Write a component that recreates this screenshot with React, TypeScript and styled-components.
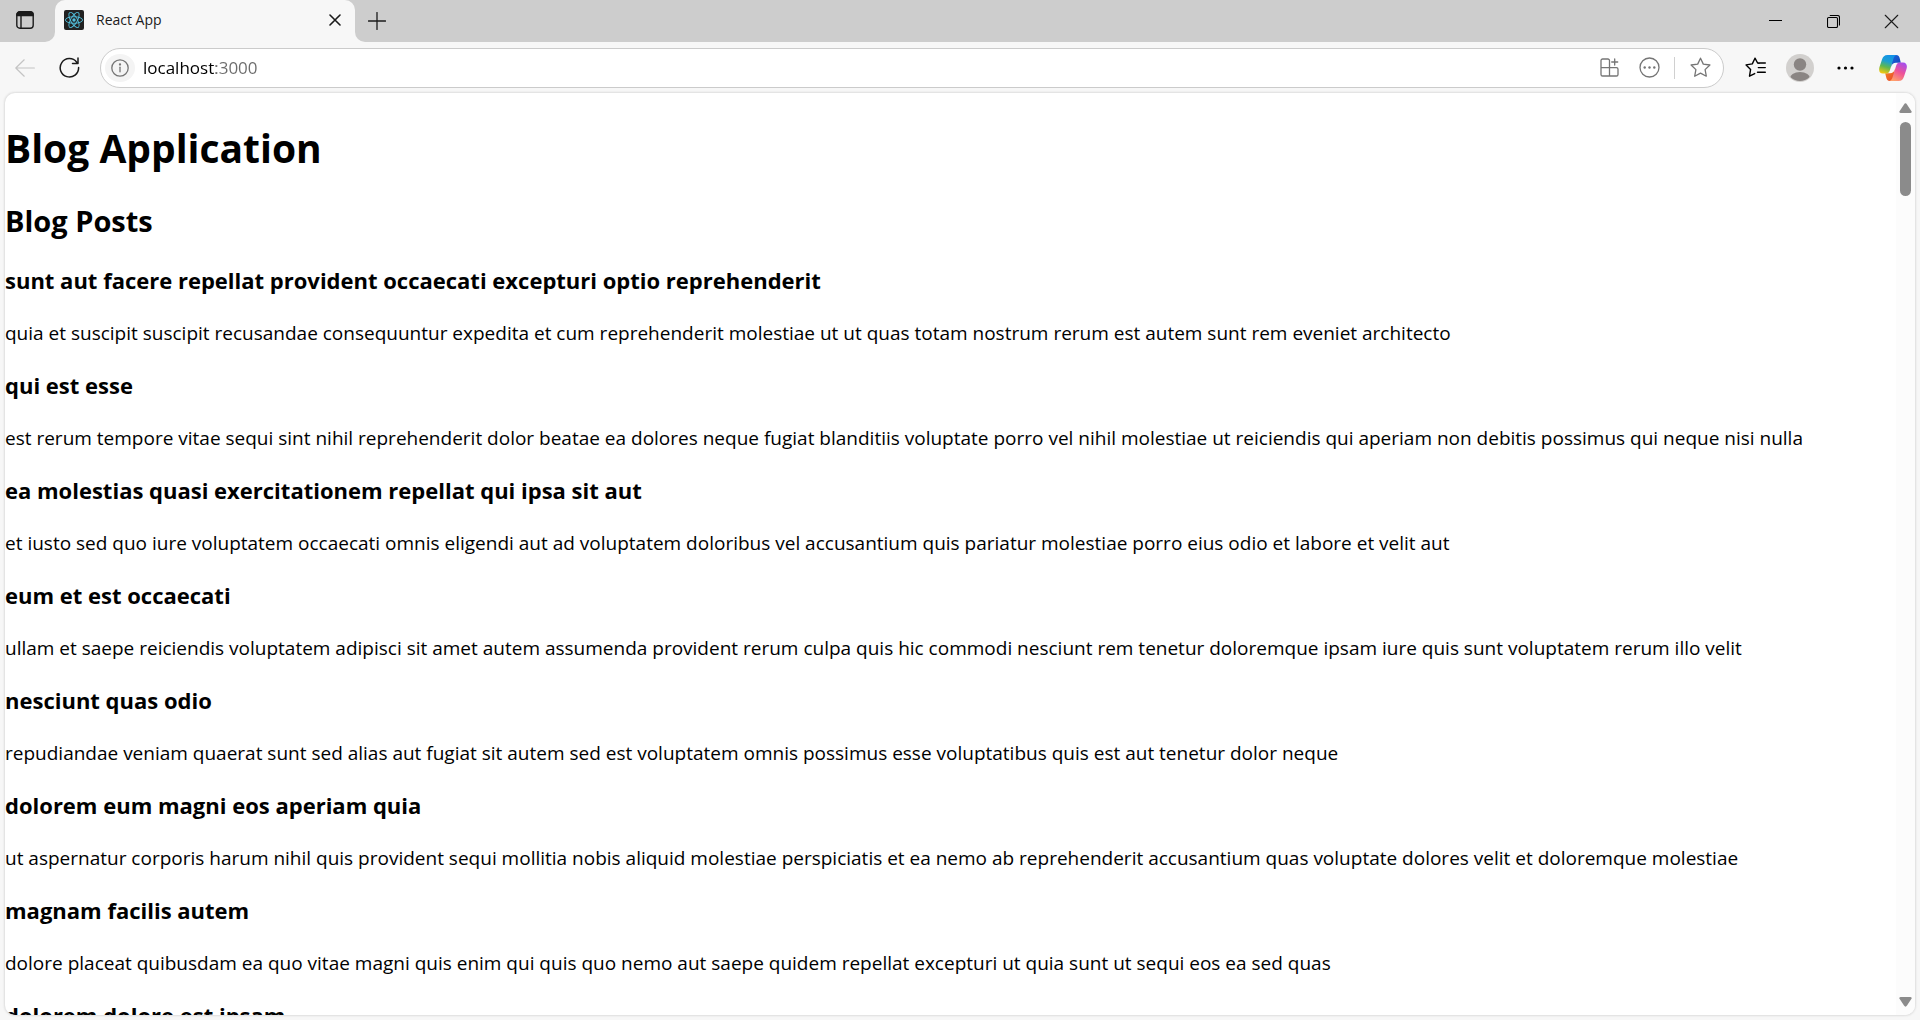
import React from "react";
import styled, { createGlobalStyle } from "styled-components";

const chrome = "#f7f7f7";
const strip = "#cdcdcd";

const GlobalStyle = createGlobalStyle`
  * { box-sizing: border-box; }
  body {
    margin: 0;
    background: ${chrome};
    color: #000;
    font-family: "Open Sans", "Noto Sans", sans-serif;
  }
  button { font: inherit; color: inherit; }
`;

const Window = styled.div`
  display: flex;
  flex-direction: column;
  height: 100vh;
  overflow: hidden;
`;

const TabStrip = styled.header`
  display: flex;
  height: 42px;
`;

const StripStart = styled.div`
  display: flex;
  align-items: center;
  padding: 0 17px 2px 12px;
  background: ${strip};
  border-bottom-right-radius: 10px;
`;

const StripEnd = styled.div`
  flex: 1;
  display: flex;
  align-items: center;
  justify-content: space-between;
  padding-left: 8px;
  background: ${strip};
  border-bottom-left-radius: 10px;
`;

const IconButton = styled.button<{ $width?: number; $height?: number; $color?: string }>`
  display: flex;
  flex: none;
  align-items: center;
  justify-content: center;
  width: ${(p) => p.$width ?? 24}px;
  height: ${(p) => p.$height ?? 32}px;
  padding: 0;
  border: 0;
  background: none;
  color: ${(p) => p.$color ?? "#1b1b1b"};
  svg { display: block; }
`;

const TabWell = styled.div`
  width: 300px;
  background: linear-gradient(${strip} 50%, ${chrome} 50%);
`;

const Tab = styled.div`
  display: flex;
  align-items: center;
  height: 100%;
  padding: 0 8px 2px 9px;
  gap: 12px;
  background: ${chrome};
  border-radius: 10px 10px 0 0;
`;

const TabTitle = styled.span`
  flex: 1;
  font-size: 14px;
  line-height: 20px;
  color: #1b1b1b;
`;

const WindowControls = styled.div`
  display: flex;
`;

const Toolbar = styled.nav`
  display: flex;
  align-items: center;
  height: 51px;
  padding: 0 13px 0 11px;
`;

const AddressBar = styled.form`
  flex: 1;
  display: flex;
  align-items: center;
  height: 40px;
  margin-right: 16px;
  padding: 0 3px 0 4px;
  border: 1px solid #cbcbcb;
  border-radius: 20px;
  background: #fff;
`;

const InfoButton = styled(IconButton)`
  border-radius: 50%;
  background: #f4f4f4;
`;

const CopilotButton = styled(IconButton)`
  margin-left: 19px;
`;

const Address = styled.input`
  flex: 1;
  min-width: 0;
  padding: 0 8px;
  border: 0;
  outline: 0;
  font: 17px/24px "Open Sans", "Noto Sans", sans-serif;
  background: linear-gradient(90deg, #000 81px, #6b6b6b 81px);
  background-clip: text;
  -webkit-text-fill-color: transparent;
`;

const Divider = styled.span`
  width: 1px;
  height: 22px;
  margin: 0 5px;
  background: #d0d0d0;
`;

const Page = styled.div`
  flex: 1;
  display: flex;
  min-height: 0;
  margin: 0 5px 5px;
  overflow: hidden;
  border-radius: 10px;
  background: #fff;
  box-shadow: 0 0 2px 1px #dedede;
`;

const Content = styled.main`
  flex: 1;
  min-width: 0;
  overflow: hidden;
`;

const AppTitle = styled.h1`
  margin: 28px 0 26px;
  font-size: 39px;
  line-height: 54px;
`;

const SectionTitle = styled.h2`
  margin: 0 0 24px;
  font-size: 29px;
  line-height: 40px;
`;

const Post = styled.article`
  margin-bottom: 23px;
`;

const PostTitle = styled.h3`
  margin: 0 0 24px;
  font-size: 22px;
  line-height: 31px;
`;

const PostBody = styled.p`
  margin: 0;
  font-size: 19px;
  line-height: 27px;
`;

const ScrollBar = styled.div`
  display: flex;
  flex-direction: column;
  align-items: center;
  width: 19px;
  padding: 5px 0 3px;
  background: #fcfcfc;
`;

const ScrollTrack = styled.div`
  flex: 1;
  padding-top: 4px;
`;

const ScrollThumb = styled.div`
  width: 11px;
  height: 74px;
  border-radius: 6px;
  background: #8b8b8b;
`;

const posts = [
  {
    title: "sunt aut facere repellat provident occaecati excepturi optio reprehenderit",
    body: "quia et suscipit suscipit recusandae consequuntur expedita et cum reprehenderit molestiae ut ut quas totam nostrum rerum est autem sunt rem eveniet architecto",
  },
  {
    title: "qui est esse",
    body: "est rerum tempore vitae sequi sint nihil reprehenderit dolor beatae ea dolores neque fugiat blanditiis voluptate porro vel nihil molestiae ut reiciendis qui aperiam non debitis possimus qui neque nisi nulla",
  },
  {
    title: "ea molestias quasi exercitationem repellat qui ipsa sit aut",
    body: "et iusto sed quo iure voluptatem occaecati omnis eligendi aut ad voluptatem doloribus vel accusantium quis pariatur molestiae porro eius odio et labore et velit aut",
  },
  {
    title: "eum et est occaecati",
    body: "ullam et saepe reiciendis voluptatem adipisci sit amet autem assumenda provident rerum culpa quis hic commodi nesciunt rem tenetur doloremque ipsam iure quis sunt voluptatem rerum illo velit",
  },
  {
    title: "nesciunt quas odio",
    body: "repudiandae veniam quaerat sunt sed alias aut fugiat sit autem sed est voluptatem omnis possimus esse voluptatibus quis est aut tenetur dolor neque",
  },
  {
    title: "dolorem eum magni eos aperiam quia",
    body: "ut aspernatur corporis harum nihil quis provident sequi mollitia nobis aliquid molestiae perspiciatis et ea nemo ab reprehenderit accusantium quas voluptate dolores velit et doloremque molestiae",
  },
  {
    title: "magnam facilis autem",
    body: "dolore placeat quibusdam ea quo vitae magni quis enim qui quis quo nemo aut saepe quidem repellat excepturi ut quia sunt ut sequi eos ea sed quas",
  },
  { title: "dolorem dolore est ipsam" },
];

const line = { fill: "none", stroke: "currentColor", strokeLinecap: "round", strokeLinejoin: "round" } as const;

const TabActionsIcon = () => (
  <svg width="18" height="18" viewBox="0 0 18 18" {...line} strokeWidth="1.4">
    <rect x="0.8" y="0.8" width="16.4" height="16.4" rx="3" />
    <path d="M1 4.6V3.5A2.5 2.5 0 0 1 3.5 1H14.5A2.5 2.5 0 0 1 17 3.5V4.6Z" fill="currentColor" />
    <path d="M5 5V17" />
  </svg>
);

const ReactIcon = () => (
  <svg width="20" height="20" viewBox="0 0 20 20" fill="none" stroke="#53c1de" strokeWidth="0.9">
    <rect width="20" height="20" rx="2" fill="#222" stroke="none" />
    <ellipse cx="10" cy="10" rx="8.6" ry="3.3" />
    <ellipse cx="10" cy="10" rx="8.6" ry="3.3" transform="rotate(60 10 10)" />
    <ellipse cx="10" cy="10" rx="8.6" ry="3.3" transform="rotate(120 10 10)" />
    <circle cx="10" cy="10" r="1.7" fill="#53c1de" stroke="none" />
  </svg>
);

const CloseIcon = ({ size, weight }: { size: number; weight: number }) => (
  <svg width={size} height={size} viewBox="0 0 12 12" {...line} strokeWidth={weight}>
    <path d="M1 1L11 11M11 1L1 11" />
  </svg>
);

const PlusIcon = () => (
  <svg width="18" height="18" viewBox="0 0 18 18" {...line} strokeWidth="1.3">
    <path d="M9 0.5V17.5M0.5 9H17.5" />
  </svg>
);

const MinimizeIcon = () => (
  <svg width="13" height="13" viewBox="0 0 13 13" stroke="#000">
    <path d="M0 5.5H13" />
  </svg>
);

const RestoreIcon = () => (
  <svg width="13" height="13" viewBox="0 0 13 13" fill="none" stroke="#000" strokeWidth="1.1">
    <rect x="0.5" y="2.5" width="10" height="10" rx="1.2" />
    <path d="M2.8 0.5H10.5A2 2 0 0 1 12.5 2.5V10.4" />
  </svg>
);

const BackIcon = () => (
  <svg width="20" height="18" viewBox="0 0 20 18" {...line} strokeWidth="1.2">
    <path d="M19.4 9H0.8M9.2 0.8L0.8 9L9.2 17.2" />
  </svg>
);

const ReloadIcon = () => (
  <svg width="21" height="21" viewBox="0 0 21 21" {...line} strokeWidth="1.5">
    <path d="M19.6 10.5A9.2 9.2 0 1 1 17.7 5.2L18.6 6.2M19 1V6.5H13.5" />
  </svg>
);

const InfoIcon = () => (
  <svg width="18" height="18" viewBox="0 0 18 18" {...line} strokeWidth="1.3">
    <circle cx="9" cy="9" r="8.2" />
    <path d="M9 8.2V12.8" />
    <circle cx="9" cy="5.5" r="0.5" fill="currentColor" />
  </svg>
);

const AppsIcon = () => (
  <svg width="19" height="19" viewBox="0 0 19 19" {...line} strokeWidth="1.3">
    <path d="M9.5 9.7V2.6A1.6 1.6 0 0 0 7.900 1H2.600A1.600 1.600 0 0 0 1 2.600V16.400A1.600 1.600 0 0 0 2.600 18H16.400A1.600 1.600 0 0 0 18 16.400V11.300A1.600 1.600 0 0 0 16.400 9.700H1M9.500 9.700V18M14.700 1V7M11.700 4H17.700" />
  </svg>
);

const CircleDotsIcon = () => (
  <svg width="21" height="21" viewBox="0 0 21 21" {...line} strokeWidth="1.3">
    <circle cx="10.5" cy="10.5" r="9.5" />
    <g fill="currentColor" stroke="none">
      <circle cx="5.7" cy="10.5" r="1.2" />
      <circle cx="10.5" cy="10.5" r="1.2" />
      <circle cx="15.3" cy="10.5" r="1.2" />
    </g>
  </svg>
);

const StarIcon = () => (
  <svg width="21" height="21" viewBox="0 0 21 21" {...line} strokeWidth="1.3">
    <path d="M10.5 1.2L13.3 7.1L19.9 8L15.1 12.6L16.3 19.2L10.5 16.1L4.7 19.2L5.9 12.6L1.1 8L7.7 7.1Z" />
  </svg>
);

const FavoritesIcon = () => (
  <svg width="21" height="21" viewBox="0 0 21 21" {...line} strokeWidth="1.4">
    <path d="M14.2 6.2L12.6 6L10 1.2L7.3 6.9L1.1 7.9L5.6 12.4L4.5 19.2L9.7 16.6M13 6H20.3M13.3 10.6H20.3M12.5 15.2H20.3" />
  </svg>
);

const ProfileIcon = () => (
  <svg width="28" height="28" viewBox="0 0 28 28">
    <clipPath id="avatar"><circle cx="14" cy="14" r="13" /></clipPath>
    <circle cx="14" cy="14" r="14" fill="#d2d0ce" />
    <g fill="#8a8583" clipPath="url(#avatar)">
      <circle cx="14" cy="10.5" r="6.2" />
      <ellipse cx="14" cy="25" rx="10.4" ry="7" />
    </g>
  </svg>
);

const DotsIcon = () => (
  <svg width="17" height="4" viewBox="0 0 17 4" fill="#000">
    <circle cx="2" cy="2" r="1.6" />
    <circle cx="8.5" cy="2" r="1.6" />
    <circle cx="15" cy="2" r="1.6" />
  </svg>
);

const CopilotIcon = () => (
  <svg width="28" height="26" viewBox="0 0 28 26">
    <defs>
      <linearGradient id="cool" x1="0.6" y1="0" x2="0.3" y2="1">
        <stop offset="0" stopColor="#1392e8" />
        <stop offset="0.35" stopColor="#1c9fd2" />
        <stop offset="0.65" stopColor="#5fb84f" />
        <stop offset="1" stopColor="#f2c811" />
      </linearGradient>
      <linearGradient id="warm" x1="0.8" y1="0" x2="0.3" y2="1">
        <stop offset="0" stopColor="#a34ef0" />
        <stop offset="0.5" stopColor="#ee5298" />
        <stop offset="1" stopColor="#ffa06a" />
      </linearGradient>
      <linearGradient id="fold" x1="0" y1="0" x2="1" y2="1">
        <stop offset="0" stopColor="#1a66dc" />
        <stop offset="1" stopColor="#1545b8" />
      </linearGradient>
      <linearGradient id="ember" x1="0" y1="0" x2="1" y2="1">
        <stop offset="0" stopColor="#f58a1f" />
        <stop offset="1" stopColor="#e8432e" />
      </linearGradient>
    </defs>
    <path d="M14 0H17C19.5 0 20.3 1.5 20.9 4L21.8 7.8H17C14.5 7.8 13 9 12 12Z" fill="url(#fold)" />
    <path d="M14 26H11C8.5 26 7.7 24.5 7.1 22L6.2 18.2H11C13.5 18.2 15 17 16 14Z" fill="url(#ember)" />
    <path d="M8.5 0H17.5C15.5 0.5 14.8 2.5 14.2 4.5L10.8 15.5C10.2 17.5 9 18.5 7 18.5H4C0.5 18.5 -0.5 15.5 0.5 12L3 4.5C4 1.5 5.5 0 8.5 0Z" fill="url(#cool)" />
    <path d="M19.5 26H10.5C12.5 25.5 13.2 23.5 13.8 21.5L17.2 10.5C17.8 8.5 19 7.5 21 7.5H24C27.5 7.5 28.5 10.5 27.5 14L25 21.5C24 24.5 22.5 26 19.5 26Z" fill="url(#warm)" />
  </svg>
);

const ArrowIcon = ({ down }: { down?: boolean }) => (
  <svg width="13" height="10" viewBox="0 0 13 10" fill="#8b8b8b">
    <path d={down ? "M1.5 0H11.5Q13.5 0.6 12.3 2L8 8.6Q6.5 10.8 5 8.6L0.7 2Q-0.5 0.6 1.5 0Z" : "M1.5 10H11.5Q13.5 9.4 12.3 8L8 1.4Q6.5 -0.8 5 1.4L0.7 8Q-0.5 9.4 1.5 10Z"} />
  </svg>
);

export default function App() {
  return (
    <Window>
      <GlobalStyle />
      <TabStrip>
        <StripStart>
          <IconButton aria-label="Tab actions" $width={26}><TabActionsIcon /></IconButton>
        </StripStart>
        <TabWell>
          <Tab>
            <ReactIcon />
            <TabTitle>React App</TabTitle>
            <IconButton aria-label="Close tab"><CloseIcon size={12} weight={1.6} /></IconButton>
          </Tab>
        </TabWell>
        <StripEnd>
          <IconButton aria-label="New tab" $width={28}><PlusIcon /></IconButton>
          <WindowControls>
            <IconButton aria-label="Minimize" $width={58}><MinimizeIcon /></IconButton>
            <IconButton aria-label="Restore" $width={58}><RestoreIcon /></IconButton>
            <IconButton aria-label="Close window" $width={58}><CloseIcon size={15} weight={0.9} /></IconButton>
          </WindowControls>
        </StripEnd>
      </TabStrip>

      <Toolbar>
        <IconButton aria-label="Back" $width={28} $color="#c4c4c4"><BackIcon /></IconButton>
        <IconButton aria-label="Reload" $width={61}><ReloadIcon /></IconButton>
        <AddressBar>
          <InfoButton type="button" aria-label="Site information" $width={30} $height={28} $color="#757575"><InfoIcon /></InfoButton>
          <Address aria-label="Address" defaultValue="localhost:3000" />
          <IconButton type="button" aria-label="Apps" $width={40} $color="#757575"><AppsIcon /></IconButton>
          <IconButton type="button" aria-label="More page actions" $width={40} $color="#757575"><CircleDotsIcon /></IconButton>
          <Divider />
          <IconButton type="button" aria-label="Add to favorites" $width={40} $color="#757575"><StarIcon /></IconButton>
        </AddressBar>
        <IconButton aria-label="Favorites" $width={30} $color="#000"><FavoritesIcon /></IconButton>
        <IconButton aria-label="Profile" $width={60}><ProfileIcon /></IconButton>
        <IconButton aria-label="Settings and more" $width={30}><DotsIcon /></IconButton>
        <CopilotButton aria-label="Copilot" $width={28}><CopilotIcon /></CopilotButton>
      </Toolbar>

      <Page>
        <Content>
          <AppTitle>Blog Application</AppTitle>
          <SectionTitle>Blog Posts</SectionTitle>
          {posts.map((post) => (
            <Post key={post.title}>
              <PostTitle>{post.title}</PostTitle>
              {post.body && <PostBody>{post.body}</PostBody>}
            </Post>
          ))}
        </Content>
        <ScrollBar>
          <IconButton aria-label="Scroll up" $width={19} $height={20}><ArrowIcon /></IconButton>
          <ScrollTrack><ScrollThumb /></ScrollTrack>
          <IconButton aria-label="Scroll down" $width={19} $height={20}><ArrowIcon down /></IconButton>
        </ScrollBar>
      </Page>
    </Window>
  );
}
